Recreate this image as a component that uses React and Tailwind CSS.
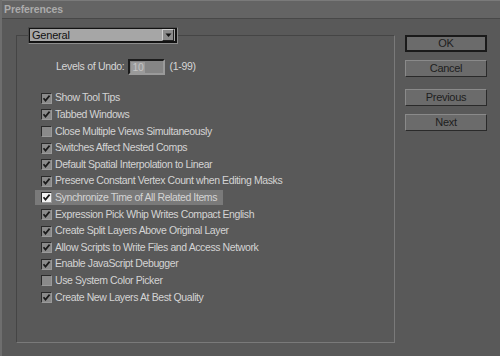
import React from "react";

const items = [
  ["Show Tool Tips", true],
  ["Tabbed Windows", true],
  ["Close Multiple Views Simultaneously", false],
  ["Switches Affect Nested Comps", true],
  ["Default Spatial Interpolation to Linear", true],
  ["Preserve Constant Vertex Count when Editing Masks", true],
  ["Synchronize Time of All Related Items", true, true],
  ["Expression Pick Whip Writes Compact English", true],
  ["Create Split Layers Above Original Layer", true],
  ["Allow Scripts to Write Files and Access Network", true],
  ["Enable JavaScript Debugger", true],
  ["Use System Color Picker", false],
  ["Create New Layers At Best Quality", true],
];

function Check({ checked, hl }) {
  return (
    <div
      className={`w-[11px] h-[11px] shrink-0 border border-t-[#2a2a2a] border-l-[#2a2a2a] border-b-[#9a9a9a] border-r-[#9a9a9a] flex items-center justify-center ${
        hl ? "bg-[#f2f2f2]" : "bg-[#8a8a8a]"
      }`}
    >
      {checked && (
        <svg width="9" height="9" viewBox="0 0 9 9">
          <path d="M1.5 4.2 L3.5 6.6 L7.6 1.6" fill="none" stroke="#1a1a1a" strokeWidth="1.7" />
        </svg>
      )}
    </div>
  );
}

function Btn({ children, def }) {
  return (
    <div
      className={`h-[17px] w-[82px] flex items-center justify-center bg-[#6b6b6b] text-[11px] tracking-[-0.3px] text-[#1e1e1e] ${
        def
          ? "border-2 border-[#1a1a1a]"
          : "border border-t-[#8a8a8a] border-l-[#8a8a8a] border-b-[#2a2a2a] border-r-[#2a2a2a]"
      }`}
    >
      {children}
    </div>
  );
}

export default function App() {
  return (
    <div
      className="w-[500px] h-[356px] bg-[#595959] border-l-2 border-[#6e6e6e] overflow-hidden flex flex-col"
      style={{ fontFamily: '"Liberation Sans", Arial, sans-serif' }}
    >
      <div className="h-[19px] shrink-0 bg-[#646464] border-t border-[#7a7a7a] border-b border-b-[#484848] flex items-center pl-[2px]">
        <span className="text-[10.5px] font-bold text-[#ababab] tracking-[-0.1px]">Preferences</span>
      </div>
      <div className="flex">
        <div className="ml-[14px] mt-[16px] w-[379px] h-[308px] border border-t-[#454545] border-l-[#454545] border-b-[#7a7a7a] border-r-[#7a7a7a] flex flex-col">
          <div className="-mt-[9px] ml-[11px] w-[150px] h-[17px] border border-t-[#4a4a4a] border-l-[#4a4a4a] border-b-[#8c8c8c] border-r-[#8c8c8c]">
            <div className="w-full h-full bg-[#a6a6a6] border border-[#121212] border-b-2 border-r-2 flex items-center">
              <span className="pl-[2px] text-[11px] tracking-[-0.2px] text-[#111] flex-1">General</span>
              <div className="w-[12px] h-[12px] mr-[1px] bg-[#8c8c8c] border border-t-[#d0d0d0] border-l-[#d0d0d0] border-b-[#222] border-r-[#222] flex items-center justify-center">
                <svg width="7" height="5" viewBox="0 0 7 5">
                  <path d="M0.5 0.5 H6.5 L3.5 4 Z" fill="#111" />
                </svg>
              </div>
            </div>
          </div>
          <div className="flex items-center mt-[15px] ml-[39px] h-[16px] text-[10.5px] tracking-[-0.3px] text-[#d6d6d6]">
            <span>Levels of Undo:</span>
            <div className="ml-[4px] w-[37px] h-[16px] bg-[#858585] border-2 border-t-[#1c1c1c] border-l-[#1c1c1c] border-b-[#9a9a9a] border-r-[#9a9a9a] flex items-center">
              <span className="ml-[1px] px-[1px] bg-[#9a9a9a] text-[#c4c4c4] text-[10.5px] leading-[11px]">10</span>
            </div>
            <span className="ml-[4px]">(1-99)</span>
          </div>
          <div className="mt-[15px] flex flex-col">
            {items.map(([label, checked, hl]) => (
              <div key={label} className="h-[16.6px] flex items-center">
                <div
                  className={`ml-[18px] h-[15px] flex items-center pl-[6px] pr-[6px] ${
                    hl ? "bg-[#7a7a7a]" : ""
                  }`}
                >
                  <Check checked={checked} hl={hl} />
                  <span className="ml-[3px] text-[10.5px] tracking-[-0.4px] text-[#d4d4d4] whitespace-nowrap">{label}</span>
                </div>
              </div>
            ))}
          </div>
        </div>
        <div className="ml-[10px] mt-[16px] flex flex-col">
          <Btn def>OK</Btn>
          <div className="mt-[8px]"><Btn>Cancel</Btn></div>
          <div className="mt-[12px]"><Btn>Previous</Btn></div>
          <div className="mt-[8px]"><Btn>Next</Btn></div>
        </div>
      </div>
    </div>
  );
}
